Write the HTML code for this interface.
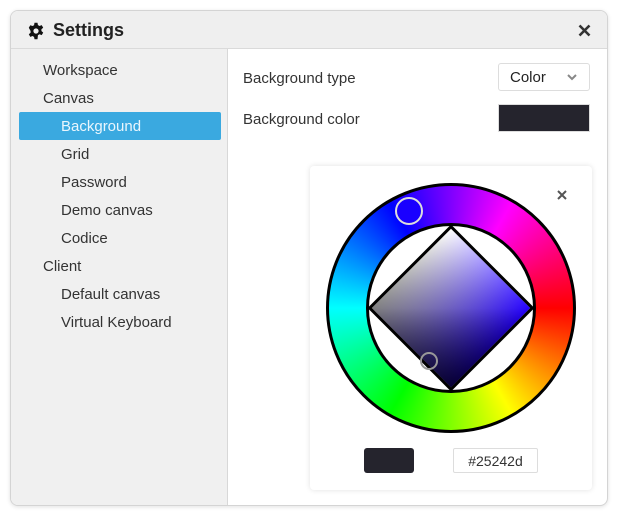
<!DOCTYPE html>
<html><head><style>
*{box-sizing:border-box;margin:0;padding:0}
body{width:618px;height:514px;background:#fff;font-family:"Liberation Sans",sans-serif;position:relative;overflow:hidden;color:#222}
.dlg{position:absolute;left:10px;top:10px;width:598px;height:496px;border:1px solid #d4d4d4;border-radius:8px;overflow:hidden;box-shadow:0 1px 4px rgba(0,0,0,.12);background:#fff}
.hdr{position:absolute;left:0;top:0;right:0;height:38px;background:#efefef;border-bottom:1px solid #dadada}
.hdr .t{position:absolute;left:42px;top:9px;font-size:18px;font-weight:bold;color:#222}
.side{position:absolute;left:0;top:38px;width:217px;bottom:0;background:#f0f0f0;border-right:1px solid #d8d8d8}
.it{position:absolute;font-size:15px;color:#333}
.sel{position:absolute;left:8px;top:63px;width:202px;height:28px;background:#3aa9e0;border-radius:2px}
.lbl{position:absolute;font-size:15px;color:#333}
.pop{position:absolute;left:299px;top:155px;width:282px;height:324px;background:#fff;border-radius:4px;box-shadow:0 0 6px rgba(0,0,0,.12)}
</style></head><body>
<div class="dlg">
 <div class="hdr">
  <svg style="position:absolute;left:16px;top:11px" width="18" height="18" viewBox="0 0 24 24"><path fill="#111" d="M10 1h4l.6 3.2a8 8 0 0 1 2 1.1l3-1.1 2 3.4-2.4 2.1a8 8 0 0 1 0 2.3l2.4 2.1-2 3.4-3-1.1a8 8 0 0 1-2 1.1L14 23h-4l-.6-3.2a8 8 0 0 1-2-1.1l-3 1.1-2-3.4 2.4-2.1a8 8 0 0 1 0-2.3L2.4 7.7l2-3.4 3 1.1a8 8 0 0 1 2-1.1zM12 8.5a3.5 3.5 0 1 0 0 7 3.5 3.5 0 0 0 0-7z"/></svg>
  <div class="t">Settings</div>
  <svg style="position:absolute;left:567px;top:13px" width="13" height="13" viewBox="0 0 13 13"><path d="M1.5 1.5l10 10M11.5 1.5l-10 10" stroke="#333" stroke-width="2.6"/></svg>
 </div>
 <div class="side">
  <div class="sel"></div>
  <div class="it" style="left:32px;top:13px">Workspace</div>
  <div class="it" style="left:32px;top:41px">Canvas</div>
  <div class="it" style="left:50px;top:69px;color:#eaf6fd">Background</div>
  <div class="it" style="left:50px;top:97px">Grid</div>
  <div class="it" style="left:50px;top:125px">Password</div>
  <div class="it" style="left:50px;top:153px">Demo canvas</div>
  <div class="it" style="left:50px;top:181px">Codice</div>
  <div class="it" style="left:32px;top:209px">Client</div>
  <div class="it" style="left:50px;top:237px">Default canvas</div>
  <div class="it" style="left:50px;top:265px">Virtual Keyboard</div>
 </div>
 <div class="lbl" style="left:232px;top:59px">Background type</div>
 <div style="position:absolute;left:487px;top:52px;width:92px;height:28px;border:1px solid #ddd;border-radius:3px;font-size:15px;padding:5px 0 0 11px;color:#222">Color
  <svg style="position:absolute;left:68px;top:10px" width="10" height="7" viewBox="0 0 10 7"><path d="M1 1l4 4 4-4" stroke="#888" stroke-width="2" fill="none"/></svg></div>
 <div class="lbl" style="left:232px;top:100px">Background color</div>
 <div style="position:absolute;left:487px;top:93px;width:92px;height:28px;background:#25242d;border:1px solid #ddd"></div>
 <div class="pop">
  <svg style="position:absolute;left:247px;top:24px" width="10" height="10" viewBox="0 0 10 10"><path d="M1 1l8 8M9 1l-8 8" stroke="#555" stroke-width="2"/></svg>
  <div style="position:absolute;left:16px;top:17px;width:250px;height:250px;border-radius:50%;background:conic-gradient(from 90deg,#f00,#ff0,#0f0,#0ff,#00f,#f0f,#f00);border:3px solid #000"></div>
  <div style="position:absolute;left:56px;top:57px;width:170px;height:170px;border-radius:50%;background:#fff;border:3px solid #000"></div>
  <div style="position:absolute;left:82px;top:83px;width:118px;height:118px;transform:rotate(45deg);border:3px solid #000;background:linear-gradient(to bottom right,rgba(0,0,0,0) 50%,rgba(0,0,0,.6)),linear-gradient(to bottom,rgba(0,0,0,0),rgba(0,0,0,.5)),linear-gradient(to right,#fff,#2400ff)"></div>
  <div style="position:absolute;left:85px;top:31px;width:28px;height:28px;border-radius:50%;border:2px solid #ddd;background:#1a00ff"></div>
  <div style="position:absolute;left:110px;top:186px;width:18px;height:18px;border-radius:50%;border:2px solid #999"></div>
  <div style="position:absolute;left:54px;top:282px;width:50px;height:25px;border-radius:3px;background:#25242d"></div>
  <div style="position:absolute;left:143px;top:282px;width:85px;height:25px;border:1px solid #ddd;border-radius:2px;font-size:14px;text-align:center;padding-top:4px;color:#333">#25242d</div>
 </div>
</div>
</body></html>
